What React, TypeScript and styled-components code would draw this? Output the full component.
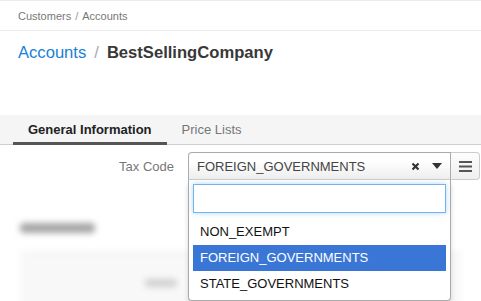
import React from 'react';
import styled, { createGlobalStyle } from 'styled-components';

const Global = createGlobalStyle`
  html, body { margin: 0; padding: 0; background: #fff; }
  body {
    font-family: "Liberation Sans", Arial, sans-serif;
    color: #333;
    overflow: hidden;
  }
`;

const Page = styled.div`
  width: 481px;
  height: 301px;
  position: relative;
  overflow: hidden;
  border-top: 1px solid #ececec;
  box-sizing: border-box;
`;

const Crumbs = styled.div`
  height: 29px;
  border-bottom: 1px solid #ebebeb;
  padding-left: 18px;
  display: flex;
  align-items: center;
  font-size: 11px;
  color: #777;
  span { margin: 0 4px; color: #999; }
`;

const Title = styled.h1`
  margin: 0;
  padding: 11px 18px 0;
  font-size: 16.6px;
  font-weight: normal;
  line-height: 22px;
  a { color: #1a7fd9; text-decoration: none; }
  b { color: #383838; }
  .sep { color: #aaa; margin: 0 8px; }
`;

const TabBar = styled.div`
  margin-top: 51px;
  height: 29px;
  background: #f5f5f5;
  border-bottom: 1px solid #cfcfcf;
  padding-left: 13px;
  display: flex;
  align-items: stretch;
`;

const Tab = styled.div<{ active?: boolean }>`
  padding: 0 15px;
  display: flex;
  align-items: center;
  font-size: 13px;
  font-weight: ${p => (p.active ? 'bold' : 'normal')};
  color: ${p => (p.active ? '#222' : '#777')};
  border-bottom: 3px solid ${p => (p.active ? '#555' : 'transparent')};
  margin-bottom: -1px;
  padding-top: 2px;
`;

const FormRow = styled.div`
  display: flex;
  align-items: flex-start;
  margin-top: 7px;
`;

const Label = styled.label`
  width: 174px;
  text-align: right;
  font-size: 13px;
  color: #777;
  line-height: 29px;
  margin-right: 14px;
`;

const SelectWrap = styled.div`
  position: relative;
  display: flex;
`;

const Select = styled.div`
  width: 263px;
  height: 28px;
  box-sizing: border-box;
  border: 1px solid #aaa;
  border-bottom-color: #ccc;
  border-radius: 4px 0 0 0;
  background: linear-gradient(#fff 30%, #eee);
  display: flex;
  align-items: center;
  padding: 0 8px;
  font-size: 13px;
  color: #444;
`;

const Value = styled.span`
  flex: 1;
`;

const MenuButton = styled.div`
  width: 29px;
  height: 28px;
  box-sizing: border-box;
  border: 1px solid #ccc;
  border-left: none;
  border-radius: 0 4px 4px 0;
  background: linear-gradient(#fdfdfd, #efefef);
  display: flex;
  align-items: center;
  justify-content: center;
`;

const Drop = styled.div`
  position: absolute;
  top: 28px;
  left: 0;
  width: 263px;
  box-sizing: border-box;
  border: 1px solid #aaa;
  border-top: none;
  border-radius: 0 0 4px 4px;
  background: #fff;
  box-shadow: 0 4px 5px rgba(0, 0, 0, 0.15);
  padding: 4px 4px 3px;
  z-index: 5;
`;

const Search = styled.div`
  height: 29px;
  box-sizing: border-box;
  border: 1px solid #74b4ec;
  box-shadow: 0 0 5px rgba(102, 175, 233, 0.5);
  margin-bottom: 6px;
`;

const Option = styled.div<{ active?: boolean }>`
  height: 26px;
  line-height: 26px;
  padding-left: 7px;
  font-size: 13px;
  color: ${p => (p.active ? '#fff' : '#111')};
  background: ${p => (p.active ? '#3a76d6' : 'transparent')};
`;

const Blurred = styled.div`
  filter: blur(3px);
  margin-top: 42px;
  padding: 0 20px;
`;

const Heading = styled.div`
  width: 75px;
  height: 10px;
  background: #a5a5a5;
  border-radius: 4px;
`;

const Panel = styled.div`
  margin-top: 19px;
  height: 60px;
  border-top: 1px solid #e6e6e6;
  background: #f8f8f8;
  display: flex;
  justify-content: flex-start;
  padding-left: 125px;
  padding-top: 26px;
  box-sizing: border-box;
`;

const Ghost = styled.div`
  width: 32px;
  height: 8px;
  background: #d0d0d0;
  border-radius: 3px;
`;

const Close = () => (
  <svg width="9" height="9" viewBox="0 0 9 9" style={{ marginRight: 12 }}>
    <path d="M1.5 1.5 L7.5 7.5 M7.5 1.5 L1.5 7.5" stroke="#333" strokeWidth="2.2" />
  </svg>
);

const Caret = () => (
  <svg width="10" height="6" viewBox="0 0 10 6">
    <path d="M0 0 H10 L5 6 Z" fill="#333" />
  </svg>
);

const Bars = () => (
  <svg width="13" height="11" viewBox="0 0 13 11">
    <path d="M0 1 H13 M0 5.5 H13 M0 10 H13" stroke="#555" strokeWidth="2" />
  </svg>
);

export default function App() {
  const options = ['NON_EXEMPT', 'FOREIGN_GOVERNMENTS', 'STATE_GOVERNMENTS'];
  return (
    <Page>
      <Global />
      <Crumbs>
        Customers<span>/</span>Accounts
      </Crumbs>
      <Title>
        <a href="#">Accounts</a>
        <span className="sep">/</span>
        <b>BestSellingCompany</b>
      </Title>
      <TabBar>
        <Tab active>General Information</Tab>
        <Tab>Price Lists</Tab>
      </TabBar>
      <FormRow>
        <Label>Tax Code</Label>
        <SelectWrap>
          <Select>
            <Value>FOREIGN_GOVERNMENTS</Value>
            <Close />
            <Caret />
          </Select>
          <MenuButton>
            <Bars />
          </MenuButton>
          <Drop>
            <Search />
            {options.map(o => (
              <Option key={o} active={o === 'FOREIGN_GOVERNMENTS'}>
                {o}
              </Option>
            ))}
          </Drop>
        </SelectWrap>
      </FormRow>
      <Blurred>
        <Heading />
        <Panel>
          <Ghost />
        </Panel>
      </Blurred>
    </Page>
  );
}
